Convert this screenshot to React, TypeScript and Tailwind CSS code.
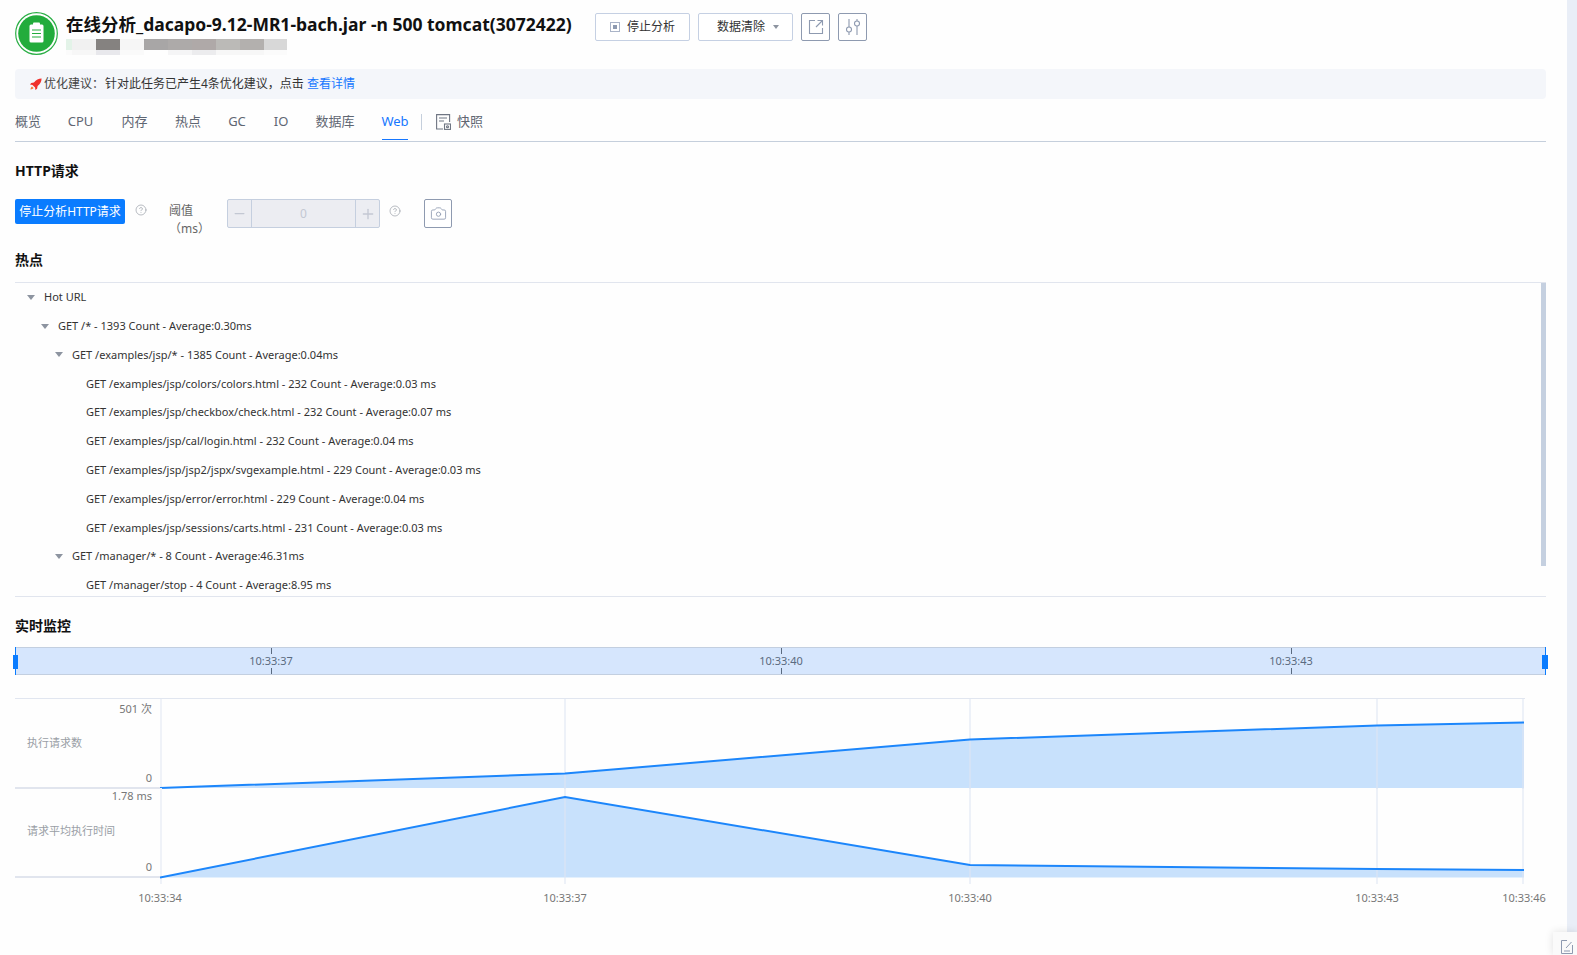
import { Camera, CircleHelp, Minus, Plus } from 'lucide-react';

const tabs = [
    { label: '概览', w: 'w-[26px]', mr: 'mr-[28px]' },
    { label: 'CPU', w: 'w-[23px]', mr: 'mr-[30px]' },
    { label: '内存', w: 'w-[25px]', mr: 'mr-[28px]' },
    { label: '热点', w: 'w-[26px]', mr: 'mr-[28px]' },
    { label: 'GC', w: 'w-[16px]', mr: 'mr-[30px]' },
    { label: 'IO', w: 'w-[12px]', mr: 'mr-[29px]' },
    { label: '数据库', w: 'w-[38px]', mr: 'mr-[28px]' },
];

const treeRows = [
    { text: 'Hot URL', pad: 'pl-[13px]', open: true },
    { text: 'GET /* - 1393 Count - Average:0.30ms', pad: 'pl-[27px]', open: true },
    { text: 'GET /examples/jsp/* - 1385 Count - Average:0.04ms', pad: 'pl-[41px]', open: true },
    { text: 'GET /examples/jsp/colors/colors.html - 232 Count - Average:0.03 ms', pad: 'pl-[71px]' },
    { text: 'GET /examples/jsp/checkbox/check.html - 232 Count - Average:0.07 ms', pad: 'pl-[71px]' },
    { text: 'GET /examples/jsp/cal/login.html - 232 Count - Average:0.04 ms', pad: 'pl-[71px]' },
    { text: 'GET /examples/jsp/jsp2/jspx/svgexample.html - 229 Count - Average:0.03 ms', pad: 'pl-[71px]' },
    { text: 'GET /examples/jsp/error/error.html - 229 Count - Average:0.04 ms', pad: 'pl-[71px]' },
    { text: 'GET /examples/jsp/sessions/carts.html - 231 Count - Average:0.03 ms', pad: 'pl-[71px]' },
    { text: 'GET /manager/* - 8 Count - Average:46.31ms', pad: 'pl-[41px]', open: true },
    { text: 'GET /manager/stop - 4 Count - Average:8.95 ms', pad: 'pl-[71px]' },
];

const mosaic = [
    { w: 'w-[6px]', top: 'bg-[#e3f3e8]', low: 'bg-[#fbfbfb]' },
    { w: 'w-[24px]', top: 'bg-[#f1f1f1]', low: 'bg-[#f7f7f7]' },
    { w: 'w-[24px]', top: 'bg-[#858280]', low: 'bg-[#e8e8ec]' },
    { w: 'w-[24px]', top: 'bg-[#f6f6f6]', low: 'bg-[#fafafa]' },
    { w: 'w-[24px]', top: 'bg-[#a8a6a6]', low: 'bg-[#fefefe]' },
    { w: 'w-[24px]', top: 'bg-[#adaaa9]', low: 'bg-[#f5f5f6]' },
    { w: 'w-[24px]', top: 'bg-[#afa9a8]', low: 'bg-[#ececee]' },
    { w: 'w-[24px]', top: 'bg-[#bbbab7]', low: 'bg-[#f7f7f7]' },
    { w: 'w-[24px]', top: 'bg-[#b3b0ae]', low: 'bg-[#f7f7f7]' },
    { w: 'w-[23px]', top: 'bg-[#d8d8d8]', low: 'bg-[#fbfbfb]' },
];

const rangeTicks = [
    { t: '10:33:37', left: 'left-[255px]' },
    { t: '10:33:40', left: 'left-[765px]' },
    { t: '10:33:43', left: 'left-[1275px]' },
];

const timeLabels = [
    { t: '10:33:34', left: 'left-[145px]' },
    { t: '10:33:37', left: 'left-[550px]' },
    { t: '10:33:40', left: 'left-[955px]' },
    { t: '10:33:43', left: 'left-[1362px]' },
    { t: '10:33:46', left: 'left-[1509px]' },
];

const gridX = [405, 810, 1217, 1363];

function Logo() {
    return (
        <svg width="43" height="43" viewBox="0 0 43 43" className="shrink-0">
            <circle cx="21.5" cy="21.5" r="20.8" fill="#fff" stroke="#2aae45" strokeWidth="1.2" />
            <circle cx="21.5" cy="21.5" r="18.3" fill="#22ac3c" />
            <rect x="14.5" y="12.5" width="14" height="18" rx="1.5" fill="#fff" />
            <rect x="18" y="10.5" width="7" height="3.5" rx="1" fill="#fff" />
            <path d="M17 18h9M17 21.5h9M17 25h9" stroke="#22ac3c" strokeWidth="1.2" />
        </svg>
    );
}

function Rocket() {
    return (
        <svg width="12" height="12" viewBox="0 0 12 12" className="shrink-0">
            <path d="M11.6.4C8.6.5 5.9 1.9 4 4.4L1.2 4.9 0 6.6l2.5.3 2.6 2.6.3 2.5 1.7-1.2.5-2.8c2.5-1.9 3.9-4.6 4-7.6z" fill="#f0302c" />
            <path d="M2 8.4c-.9.5-1.4 1.7-1.5 3.1 1.4-.1 2.6-.6 3.1-1.5z" fill="#f47a3a" />
        </svg>
    );
}

function Chart({ line, area, h }: { line: string; area: string; h: number }) {
    return (
        <svg width="1365" height={h} viewBox={`0 0 1365 ${h}`} className="block shrink-0">
            <path d={area} fill="#c8e1fc" />
            <rect x="0" y="0" width="2" height={h} fill="#eff2f8" />
            {gridX.map(x => (
                <rect key={x} x={x - 1} y="0" width="2" height={h} fill="#dfe6f2" opacity="0.55" />
            ))}
            <path d={line} fill="none" stroke="#1c86fb" strokeWidth="2" />
        </svg>
    );
}

export default function App() {
    return (
        <div className="relative flex w-[1577px] h-[955px] overflow-hidden bg-[#fefefe] text-[12px] text-[#333] font-['Noto_Sans','Noto_Sans_CJK_SC',sans-serif]">
            <div className="flex flex-col w-[1567px] pl-[15px] pr-[21px] pt-[12px]">
                {/* header */}
                <div className="flex h-[43px]">
                    <Logo />
                    <div className="flex flex-col ml-[8px] w-[529px]">
                        <span className="h-[24px] leading-[24px] text-[17.5px] font-bold text-[#111] whitespace-nowrap">在线分析_dacapo-9.12-MR1-bach.jar -n 500 tomcat(3072422)</span>
                        <div className="flex mt-[3px]">
                            {mosaic.map((m, i) => (
                                <div key={i} className={`flex flex-col ${m.w}`}>
                                    <div className={`h-[11px] ${m.top}`} />
                                    <div className={`h-[5px] ${m.low}`} />
                                </div>
                            ))}
                        </div>
                    </div>
                    <div className="flex items-center gap-[8px] h-[28px] mt-[1px]">
                        <button className="flex items-center justify-center gap-[7px] w-[95px] h-[28px] rounded-[2px] border border-[#c5d0e3] bg-white text-[12px] text-[#333]">
                            <span className="flex items-center justify-center w-[10px] h-[10px] border border-[#aab4c8]">
                                <span className="w-[4px] h-[4px] bg-[#8e9ab0]" />
                            </span>
                            停止分析
                        </button>
                        <button className="flex items-center justify-center gap-[8px] w-[95px] h-[28px] pl-[5px] rounded-[2px] border border-[#c5d0e3] bg-white text-[12px] text-[#333]">
                            数据清除
                            <span className="w-0 h-0 border-x-[3.5px] border-x-transparent border-t-[4px] border-t-[#8d94a0]" />
                        </button>
                        <button className="flex items-center justify-center w-[29px] h-[28px] rounded-[2px] border border-[#8e9ab0] bg-white">
                            <svg width="16" height="16" viewBox="0 0 16 16" fill="none" stroke="#8e9ab0" strokeWidth="1.1">
                                <path d="M7 1.5H1.5v13h13V9" />
                                <path d="M8 8l6.5-6.5M9.5 1.5h5V6.5" />
                            </svg>
                        </button>
                        <button className="flex items-center justify-center w-[29px] h-[28px] rounded-[2px] border border-[#8e9ab0] bg-white">
                            <svg width="18" height="18" viewBox="0 0 18 18" fill="none" stroke="#8e9ab0" strokeWidth="1.1">
                                <path d="M5 1v8M5 14v3M13 1v2M13 8v9" />
                                <circle cx="5" cy="11.5" r="2.5" />
                                <circle cx="13" cy="5.5" r="2.5" />
                            </svg>
                        </button>
                    </div>
                </div>

                {/* tip */}
                <div className="flex items-center h-[30px] mt-[14px] pl-[15px] rounded-[4px] bg-[#f4f6fa] text-[12px] text-[#444]">
                    <Rocket />
                    <span className="ml-[2px] w-[61px]">优化建议：</span>
                    <span className="text-[#333]">针对此任务已产生4条优化建议，点击</span>
                    <span className="ml-[3px] text-[#1677ff]">查看详情</span>
                </div>

                {/* tabs */}
                <div className="flex items-start mt-[5px] pb-[1px] border-b border-b-[#c5cfdc] text-[13px] text-[#5f6672]">
                    {tabs.map(tab => (
                        <span key={tab.label} className={`flex items-center justify-center h-[36px] ${tab.w} ${tab.mr} whitespace-nowrap`}>{tab.label}</span>
                    ))}
                    <span className="flex items-center justify-center h-[36px] w-[26px] border-b-[1.5px] border-b-[#1677ff] text-[#1677ff]">Web</span>
                    <span className="w-px h-[16px] mt-[10px] ml-[13px] bg-[#c5cfdc]" />
                    <span className="flex items-center h-[36px] ml-[14px] gap-[6px]">
                        <svg width="15" height="16" viewBox="0 0 15 16" fill="none" stroke="#6f7683" strokeWidth="1.1">
                            <path d="M7 15H.6V.6h13V8" />
                            <path d="M3 4h8M3 7h5" />
                            <rect x="8.5" y="10" width="6" height="5.4" />
                            <circle cx="11.5" cy="12.7" r="1" />
                        </svg>
                        快照
                    </span>
                </div>

                {/* http */}
                <span className="h-[20px] mt-[19px] leading-[20px] text-[14px] font-bold text-[#111]">HTTP请求</span>
                <div className="flex items-start h-[29px] mt-[18px]">
                    <button className="flex items-center justify-center w-[110px] h-[25px] rounded-[2px] bg-[#0a7cff] text-[12px] text-white">停止分析HTTP请求</button>
                    <CircleHelp className="w-[12px] h-[12px] ml-[10px] mt-[5px] text-[#9a9fa8]" strokeWidth={1.4} />
                    <span className="ml-[22px] w-[58px] mt-[3px] text-[12px] text-[#666]">阈值（ms）</span>
                    <div className="flex w-[153px] h-[29px] rounded-[2px] border border-[#c5cfdf] bg-[#ecedf2] text-[#c3c8d3]">
                        <span className="flex items-center justify-center w-[24px] border-r border-r-[#c5cfdf]"><Minus className="w-[15px] h-[15px]" /></span>
                        <span className="flex flex-1 items-center justify-center text-[12px]">0</span>
                        <span className="flex items-center justify-center w-[24px] border-l border-l-[#c5cfdf]"><Plus className="w-[16px] h-[16px]" /></span>
                    </div>
                    <CircleHelp className="w-[12px] h-[12px] ml-[9px] mt-[6px] text-[#9a9fa8]" strokeWidth={1.4} />
                    <button className="flex items-center justify-center w-[28px] h-[29px] ml-[23px] rounded-[2px] border border-[#8e9ab0] bg-white">
                        <Camera className="w-[17px] h-[17px] text-[#8e9ab0]" strokeWidth={1.2} />
                    </button>
                </div>

                {/* hot spots */}
                <span className="h-[20px] mt-[22px] leading-[20px] text-[14px] font-bold text-[#111]">热点</span>
                <div className="relative h-[315px] mt-[12px] overflow-hidden border-y border-y-[#e1e5ee]">
                    {treeRows.map(row => (
                        <div key={row.text} className={`relative flex items-center h-[28.8px] ${row.pad} text-[11px] text-[#333] whitespace-nowrap`}>
                            {row.open && <span className="w-0 h-0 mr-[8px] ml-[-1px] border-x-[4px] border-x-transparent border-t-[5px] border-t-[#8d94a0]" />}
                            {row.open ? <span className="ml-[1px]">{row.text}</span> : row.text}
                        </div>
                    ))}
                    <div className="absolute right-0 top-0 w-[5px] h-[283px] bg-[#c5d0e0]" />
                </div>

                {/* monitor */}
                <span className="h-[20px] mt-[19px] leading-[20px] text-[14px] font-bold text-[#111]">实时监控</span>
                <div className="relative h-[28px] mt-[11px] border border-[#c3cfe0] bg-[#d6e6fd] text-[11px] text-[#5b6b80]">
                    {rangeTicks.map(tick => (
                        <div key={tick.t} className={`absolute top-0 bottom-0 ${tick.left} flex flex-col items-center justify-between w-0`}>
                            <span className="w-px h-[6px] shrink-0 bg-[#5b6b80]" />
                            <span className="whitespace-nowrap leading-[12px]">{tick.t}</span>
                            <span className="w-px h-[6px] shrink-0 bg-[#5b6b80]" />
                        </div>
                    ))}
                    <div className="absolute left-[-1px] top-[-1px] bottom-[-1px] w-px bg-[#0a7cff]" />
                    <div className="absolute left-[-3px] top-[7px] w-[5px] h-[14px] bg-[#0a7cff]" />
                    <div className="absolute right-[-1px] top-[-1px] bottom-[-1px] w-px bg-[#0a7cff]" />
                    <div className="absolute right-[-3px] top-[7px] w-[6px] h-[14px] bg-[#0a7cff]" />
                </div>

                <div className="flex flex-col w-[1510px] mt-[23px] text-[11px] text-[#777]">
                    <div className="flex h-[91px] border-t border-t-[#e1e6f0]">
                        <div className="relative flex flex-col justify-between items-end w-[145px] h-full pr-[8px] border-b-2 border-b-[#e1e5ee]">
                            <span className="leading-[16px] mt-[2px]">501 次</span>
                            <span className="absolute left-[12px] top-[36px] leading-[16px] text-[#9a9ea6]">执行请求数</span>
                            <span className="leading-[16px] mb-px">0</span>
                        </div>
                        <Chart
                            h={90}
                            line="M0 89 L405 74.5 L810 40.5 L1217 26.5 L1364 23.5"
                            area="M0 89 L405 74.5 L810 40.5 L1217 26.5 L1364 23.5 V89 Z"
                        />
                    </div>
                    <div className="flex h-[96px] mt-[-1px]">
                        <div className="relative flex flex-col justify-between items-end w-[145px] h-[90px] pr-[8px] border-b-2 border-b-[#e1e5ee]">
                            <span className="leading-[16px]">1.78 ms</span>
                            <span className="absolute left-[12px] top-[35px] leading-[16px] text-[#9a9ea6]">请求平均执行时间</span>
                            <span className="leading-[16px] mb-px">0</span>
                        </div>
                        <Chart
                            h={96}
                            line="M0 89.5 L405 9 L810 77 L1217 81 L1364 82"
                            area="M0 89.5 L405 9 L810 77 L1217 81 L1364 82 V89.5 Z"
                        />
                    </div>
                    <div className="relative h-[28px]">
                        {timeLabels.map(label => (
                            <span key={label.t} className={`absolute ${label.left} top-[6px] -translate-x-1/2 leading-[16px] whitespace-nowrap`}>{label.t}</span>
                        ))}
                    </div>
                </div>
            </div>

            {/* page scrollbar */}
            <div className="w-[10px] h-full bg-[#e9eef7]" />

            <div className="absolute right-0 bottom-0 flex justify-end w-[24px] h-[23px] pt-[8px] pr-[4px] bg-[#fafafa] shadow-[0_0_8px_rgba(0,0,0,0.12)]">
                <svg width="12" height="14" viewBox="0 0 12 14" fill="none" stroke="#8e9ab0" strokeWidth="1">
                    <path d="M6 .5H.5v13h11V5" />
                    <path d="M5 8l5.5-6M3 11h6" />
                </svg>
            </div>
        </div>
    );
}
